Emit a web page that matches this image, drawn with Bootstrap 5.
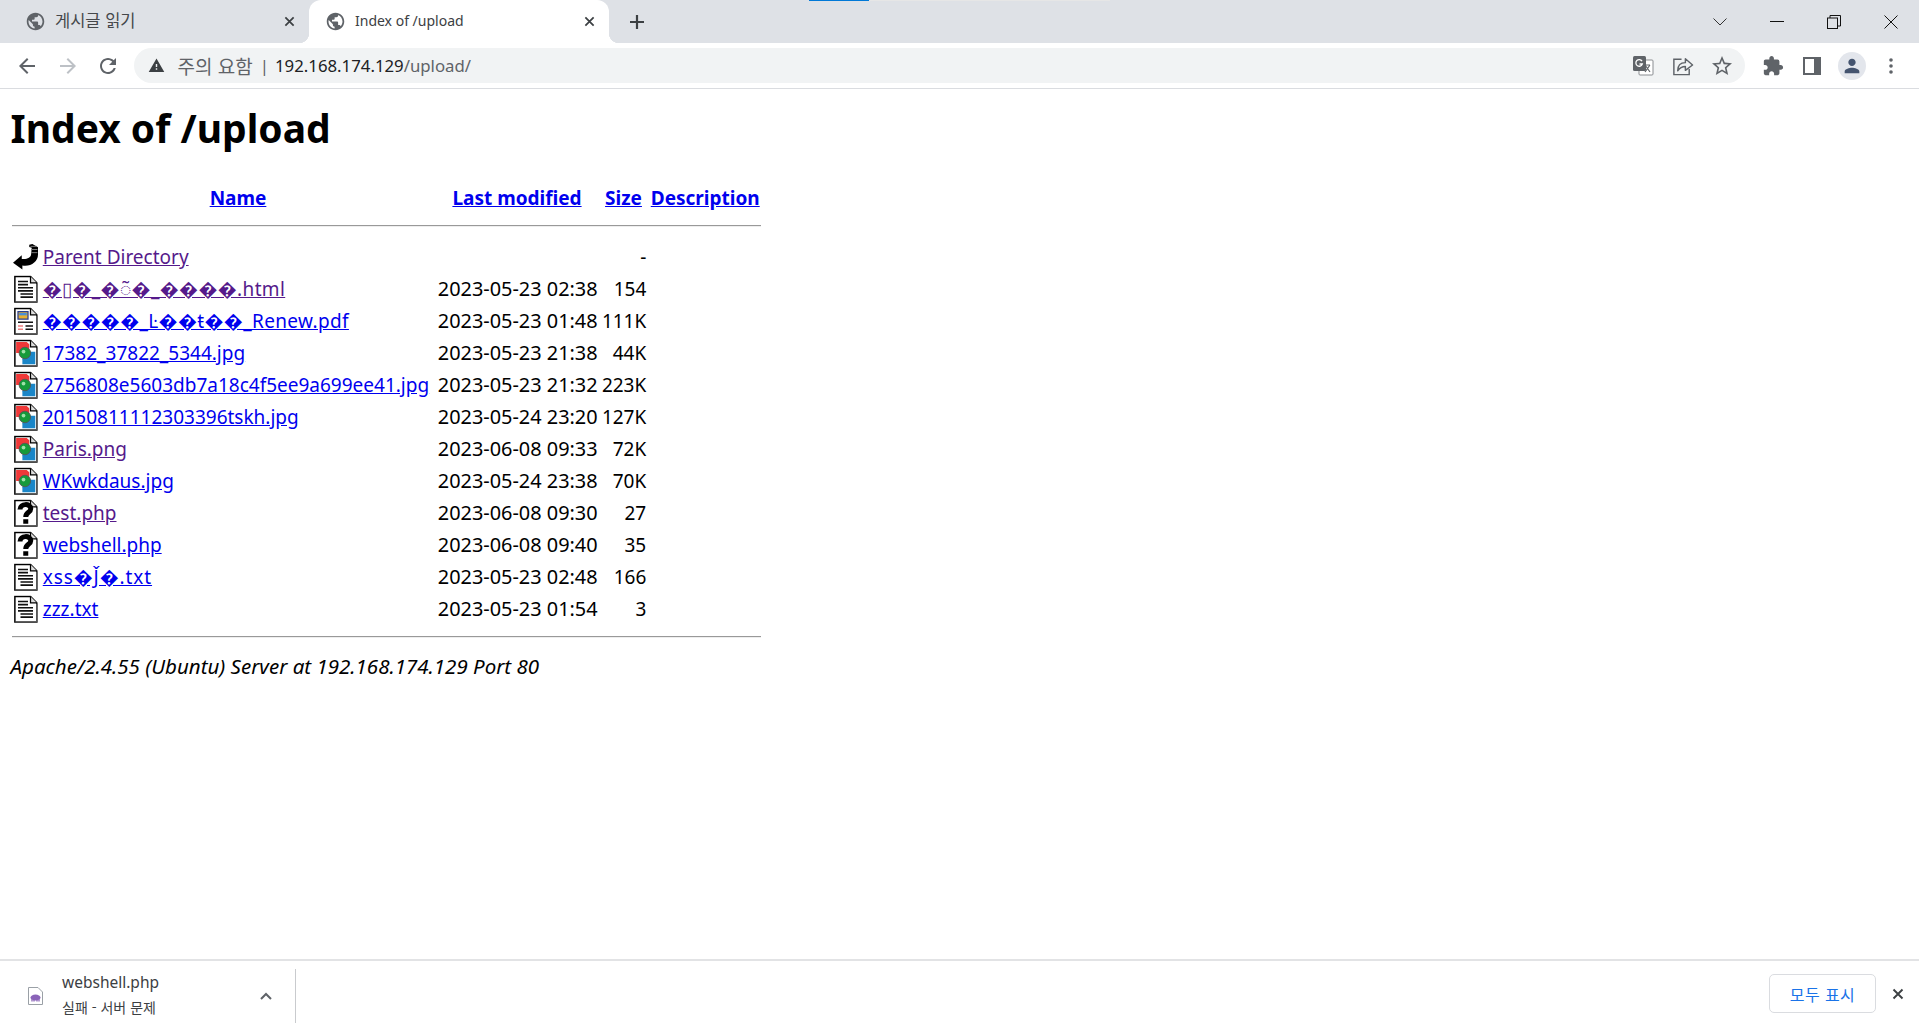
<!DOCTYPE html>
<html lang="ko"><head><meta charset="utf-8"><title>Index of /upload</title>
<link href="https://cdn.jsdelivr.net/npm/bootstrap@5.3.0/dist/css/bootstrap.min.css" rel="stylesheet">
<style>
html,body{height:100%;margin:0}
body{overflow:hidden;background:#fff;color:#000;font-family:"Noto Sans","Noto Sans CJK KR",sans-serif;font-size:19px}
.shell{height:1028px}
.strip{height:43px;background:#dee1e6;flex:none;position:relative;font-size:14px;color:#45474a}
.progress-a{position:absolute;left:809px;top:0;width:60px;height:1px;background:#0078d7}
.progress-b{position:absolute;left:869px;top:0;width:241px;height:1px;background:#e6e6e6}
.tabx{width:300px;height:43px;padding:0 10px 0 25px;position:relative;flex:none}
.tab-idle{width:309px}
.tab-on{background:#fff;border-radius:12px 12px 0 0;color:#3c4043}
.tab-on::before,.tab-on::after{content:"";position:absolute;bottom:0;width:10px;height:10px}
.tab-on::before{left:-10px;background:radial-gradient(circle at 0 0,transparent 10px,#fff 10.5px)}
.tab-on::after{right:-10px;background:radial-gradient(circle at 100% 0,transparent 10px,#fff 10.5px)}
.tab-title{flex:1;margin-left:9px;white-space:nowrap;padding-bottom:3px}
.tab-ko{font-size:16.5px;font-family:"Noto Sans CJK KR",sans-serif}
.ico{fill:#5f6368;flex:none}
.toolbar{height:46px;flex:none;border-bottom:1px solid #dadce0;padding:0 8px 0 7px;background:#fff}
.navbtn{width:40.5px;flex:none;display:flex;justify-content:center}
.omni{flex:1;height:35px;margin-left:5px;background:#f1f3f4;border-radius:18px;padding:0 0 0 14px;font-size:16.8px;color:#5f6368}
.omni b{font-weight:400;color:#202124}
.omni-ko{font-size:19px;font-family:"Noto Sans CJK KR",sans-serif;margin-left:13px;line-height:1}
.omni-sep{margin:0 6px 0 7px}
.omni-right{gap:16px;padding-right:11px}
.win-ctl{width:57px;flex:none;display:flex;justify-content:center}
.ext{width:39.5px;flex:none;display:flex;justify-content:center}
.avatar{width:28px;height:28px;border-radius:50%;background:#e3e6ec;display:flex;align-items:center;justify-content:center}
.pagebody{flex:1;min-height:0;padding:0 9.5px;overflow:hidden}
.pagebody h1{font-size:39px;font-weight:700;line-height:40px;margin:19px 0 34px 1px;letter-spacing:0}
.pagebody a{color:#00e}
.pagebody a.seen{color:#551a8b}
.pagebody a.sp1{letter-spacing:.35px}
.pagebody a.sp2{letter-spacing:.9px}
.lst{border-collapse:separate;border-spacing:2.5px 0;width:751px;table-layout:fixed}
.lst th,.lst td{padding:0 1.25px;height:32px;line-height:32px;white-space:nowrap;font-weight:400}
.lst th{font-weight:700;text-align:center}
.lst td.stamp{font-size:19.9px}
.lst svg{display:block}
.c1{width:28px}.c2{width:393px}.c3{width:161px}.c4{width:48px}.c5{width:111px}
.r{text-align:right}
.lst td.rule-cell{height:auto;line-height:0;padding:0}
.dir-rule{display:block;margin:0;opacity:1;height:2px;border:0;border-top:1px solid #999;border-bottom:1px solid #eee}
.rule-top{margin-top:11px;margin-bottom:14px}
.rule-bot{margin-top:11px}
.srv{font-style:italic;font-size:20.5px;margin-top:12px;margin-left:1px;line-height:32px}
.shelf{height:69px;flex:none;border-top:2px solid #e2e3e5;background:#fff;position:relative}
.dl{width:296px;height:54px;margin-top:8px;border-right:1px solid #c9cbce;padding-left:28px;flex:none}
.dl-txt{margin-left:19px;width:198px;line-height:1}
.dl-name{font-size:15.5px;color:#3c4043;margin-bottom:9px;margin-top:-3px}
.dl-sub{font-size:14px;color:#3c4043;font-family:"Noto Sans CJK KR",sans-serif}
.showall{width:107px;height:39px;border:1px solid #dadce0;border-radius:5px;color:#1a73e8;font-size:16px;background:#fff;padding:0;letter-spacing:.4px;font-family:"Noto Sans CJK KR",sans-serif}
.shelf-end{padding-right:15px;gap:16px;margin-top:13px}
.shelf-x{margin-top:14px}
</style></head>
<body>
<svg width="0" height="0" class="d-block position-absolute"><defs>
<symbol id="globe" viewBox="0 0 24 24"><path d="M12 2C6.48 2 2 6.48 2 12s4.48 10 10 10 10-4.48 10-10S17.52 2 12 2zm-1 17.93c-3.95-.49-7-3.85-7-7.93 0-.62.08-1.21.21-1.79L9 15v1c0 1.1.9 2 2 2v1.93zm6.9-2.54c-.26-.81-1-1.39-1.9-1.39h-1v-3c0-.55-.45-1-1-1H8v-2h2c.55 0 1-.45 1-1V7h2c1.1 0 2-.9 2-2v-.41c2.93 1.19 5 4.06 5 7.41 0 2.08-.8 3.97-2.1 5.39z"/></symbol>
<symbol id="xmark" viewBox="0 0 12 12"><path d="M1.500 1.500l9 9M10.500 1.500l-9 9" stroke="#3c4043" stroke-width="1.900" fill="none"/></symbol>
<symbol id="sheet" viewBox="0 0 20 22"><path d="M1.500 1H14L19 6V21.500H1.500Z" fill="#fff" stroke="#000" stroke-width="1.200"/><path d="M2 21.400H19V6.500" fill="none" stroke="#555" stroke-width="1.200"/><path d="M14 1V6H19" fill="#ddd" stroke="#000" stroke-width="1"/></symbol>
<symbol id="f-text" viewBox="0 0 20 22"><use href="#sheet"/><path d="M4 5h8M4 7.500h8M4 10h12M4 12.500h12M6 15h10M6 17.500h10" stroke="#111" stroke-width="1.300"/></symbol>
<symbol id="f-pdf" viewBox="0 0 20 22"><use href="#sheet"/><rect x="4" y="3.500" width="8" height="6" fill="#e8b030" stroke="#2a3f8f" stroke-width="1"/><rect x="5" y="4.500" width="6" height="2" fill="#4a8fd8"/><path d="M4 12h12M10 15h6M10 17.500h6" stroke="#111" stroke-width="1.200"/><path d="M4 15h4M4 17.500h4" stroke="#f08080" stroke-width="1.200"/></symbol>
<symbol id="f-img" viewBox="0 0 20 22"><use href="#sheet"/><path d="M2.500 2.200H11L13 4v4H9L7 11H2.500Z" fill="#f03838"/><path d="M10 10h7.800v10H7.500V16Z" fill="#1a86c8"/><circle cx="9.500" cy="11" r="4.600" fill="#169a3a" stroke="#555" stroke-width=".7"/><circle cx="8.400" cy="9.800" r="1.500" fill="#9fe0a8"/></symbol>
<symbol id="f-unk" viewBox="0 0 20 22"><use href="#sheet"/><path d="M5.600 8.200C5.600 3.200 14.200 3 14.200 7.600C14.200 10.600 10.200 10.400 10.200 14.200" fill="none" stroke="#000" stroke-width="4"/><rect x="8.200" y="16" width="4" height="3.600" fill="#000"/></symbol>
<symbol id="f-back" viewBox="0 0 20 22"><path d="M0 15.500L7 9.500V12.500C11 13 14.500 11.500 14.500 8.500L15 3.500L13 3V1.200L15.500 .6L20 3.200V9C20 15 14 19 7.500 17.800V21Z" fill="#000"/><path d="M14 2.500h5M14.500 5h5M14.500 7.500h5" stroke="#777" stroke-width=".8"/></symbol>
</defs></svg>
<div class="shell d-flex flex-column">
  <div class="strip d-flex">
    <div class="progress-a"></div><div class="progress-b"></div>
    <div class="tabx tab-idle d-flex align-items-center">
      <svg class="ico" width="21" height="21"><use href="#globe"/></svg>
      <span class="tab-title tab-ko">게시글 읽기</span>
      <svg class="me-1" width="11" height="11"><use href="#xmark"/></svg>
    </div>
    <div class="tabx tab-on d-flex align-items-center ps-3">
      <svg class="ico" width="21" height="21"><use href="#globe"/></svg>
      <span class="tab-title">Index of /upload</span>
      <svg class="me-1" width="11" height="11"><use href="#xmark"/></svg>
    </div>
    <div class="d-flex align-items-center ms-3 me-auto ps-1">
      <svg width="16" height="16" viewBox="0 0 16 16"><path d="M8 1v14M1 8h14" stroke="#3c4043" stroke-width="2.200"/></svg>
    </div>
    <div class="d-flex align-items-center">
      <div class="win-ctl"><svg width="14" height="8" viewBox="0 0 14 8"><path d="M.5 .5L7 7l6.500-6.500" fill="none" stroke="#333" stroke-width="1"/></svg></div>
      <div class="win-ctl"><svg width="14" height="2"><rect width="14" height="1" fill="#111"/></svg></div>
      <div class="win-ctl"><svg width="14" height="14" viewBox="0 0 14 14"><rect x=".5" y="3" width="10" height="10.500" fill="none" stroke="#111"/><path d="M3 3V.5H13.500V11H10.500" fill="none" stroke="#111"/></svg></div>
      <div class="win-ctl"><svg width="14" height="14" viewBox="0 0 14 14"><path d="M.5 .5l13 13M13.500 .5l-13 13" stroke="#111" stroke-width="1"/></svg></div>
    </div>
  </div>
  <div class="toolbar d-flex align-items-center">
    <div class="navbtn"><svg class="ico" width="24" height="24" viewBox="0 0 24 24"><path d="M20 11H7.830l5.590-5.590L12 4l-8 8 8 8 1.410-1.410L7.830 13H20v-2z"/></svg></div>
    <div class="navbtn"><svg width="24" height="24" viewBox="0 0 24 24" fill="#bdc1c6"><path d="M12 4l-1.410 1.410L16.170 11H4v2h12.170l-5.580 5.590L12 20l8-8z"/></svg></div>
    <div class="navbtn"><svg class="ico" width="24" height="24" viewBox="0 0 24 24"><path d="M17.650 6.350C16.200 4.900 14.210 4 12 4c-4.420 0-7.990 3.580-7.990 8s3.570 8 7.990 8c3.730 0 6.840-2.550 7.730-6h-2.080c-.82 2.330-3.040 4-5.650 4-3.310 0-6-2.690-6-6s2.690-6 6-6c1.660 0 3.140.69 4.220 1.780L13 11h7V4l-2.350 2.350z"/></svg></div>
    <div class="omni d-flex align-items-center">
      <svg class="ico" width="17" height="17" viewBox="0 0 24 24"><path fill="#3c4043" d="M1 21h22L12 2 1 21zm12-3h-2v-2h2v2zm0-4h-2v-4h2v4z"/></svg>
      <span class="omni-ko">주의 요함</span><span class="omni-sep">|</span><span><b>192.168.174.129</b>/upload/</span>
      <div class="ms-auto d-flex align-items-center omni-right">
        <svg width="24" height="24" viewBox="0 0 24 24"><rect x="8" y="6" width="14" height="15" rx="1" fill="#fff" stroke="#8a8d91" stroke-width="1"/><rect x="2" y="2" width="13" height="15" rx="1.500" fill="#5f6368"/><path d="M11 7.200A3.300 3.300 0 1 0 11.300 10H8.500" fill="none" stroke="#fff" stroke-width="1.300"/><path d="M14 11l5 7M19 11l-5 7M13 11h6" stroke="#5f6368" stroke-width="1.200" fill="none"/></svg>
        <svg width="23" height="24" viewBox="0 0 24 24" fill="none" stroke="#5f6368" stroke-width="1.500"><path d="M11 5H3V21H19V15"/><path d="M7 17C7 11 10.500 8.500 15 8.500V4.500L22.500 11L15 16.500V12.500C11.500 12.500 9 14 7 17Z" stroke-linejoin="round"/></svg>
        <svg class="ico" width="24" height="24" viewBox="0 0 24 24"><path d="M22 9.240l-7.190-.62L12 2 9.190 8.630 2 9.240l5.460 4.730L5.820 21 12 17.270 18.180 21l-1.630-7.030L22 9.240zM12 15.400l-3.760 2.270 1-4.280-3.320-2.880 4.380-.38L12 6.100l1.710 4.040 4.380.38-3.320 2.880 1 4.280L12 15.400z"/></svg>
      </div>
    </div>
    <div class="ext ms-2"><svg class="ico" width="22" height="22" viewBox="0 0 24 24"><path d="M20.500 11H19V7c0-1.100-.9-2-2-2h-4V3.500C13 2.120 11.880 1 10.500 1S8 2.120 8 3.500V5H4c-1.100 0-1.990.9-1.990 2v3.800H3.500c1.490 0 2.700 1.210 2.700 2.700s-1.210 2.700-2.700 2.700H2V20c0 1.100.9 2 2 2h3.800v-1.500c0-1.490 1.210-2.700 2.700-2.700 1.490 0 2.700 1.210 2.700 2.700V22H17c1.100 0 2-.9 2-2v-4h1.500c1.380 0 2.500-1.120 2.500-2.500S21.880 11 20.500 11z"/></svg></div>
    <div class="ext"><svg width="18" height="18" viewBox="0 0 18 18"><rect width="18" height="18" fill="#5f6368"/><rect x="2" y="2" width="9" height="14" fill="#fff"/></svg></div>
    <div class="ext"><div class="avatar"><svg width="22" height="22" viewBox="0 0 24 24" fill="#44546f"><path d="M12 12c2.210 0 4-1.790 4-4s-1.790-4-4-4-4 1.790-4 4 1.790 4 4 4zm0 2c-2.670 0-8 1.340-8 4v2h16v-2c0-2.660-5.330-4-8-4z"/></svg></div></div>
    <div class="ext"><svg width="4" height="16" viewBox="0 0 4 16" fill="#5f6368"><circle cx="2" cy="2" r="1.800"/><circle cx="2" cy="8" r="1.800"/><circle cx="2" cy="14" r="1.800"/></svg></div>
  </div>
  <main class="pagebody">
    <h1>Index of /upload</h1>
    <table class="lst">
      <colgroup><col class="c1"><col class="c2"><col class="c3"><col class="c4"><col class="c5"></colgroup>
      <tr><th></th><th><a href="#">Name</a></th><th><a href="#">Last modified</a></th><th><a href="#">Size</a></th><th><a href="#">Description</a></th></tr>
      <tr><td class="rule-cell" colspan="5"><hr class="dir-rule rule-top"></td></tr>
      <tr><td><svg width="25" height="28"><use href="#f-back"/></svg></td><td><a class="seen" href="#">Parent Directory</a></td><td></td><td class="r">-</td><td></td></tr>
      <tr><td><svg width="25" height="28"><use href="#f-text"/></svg></td><td><a class="seen sp1" href="#">�▯�_�◌̃�_����.html</a></td><td class="stamp">2023-05-23 02:38</td><td class="r">154</td><td></td></tr>
      <tr><td><svg width="25" height="28"><use href="#f-pdf"/></svg></td><td><a class="sp1" href="#">�����_Ŀ��ŧ��_Renew.pdf</a></td><td class="stamp">2023-05-23 01:48</td><td class="r">111K</td><td></td></tr>
      <tr><td><svg width="25" height="28"><use href="#f-img"/></svg></td><td><a href="#">17382_37822_5344.jpg</a></td><td class="stamp">2023-05-23 21:38</td><td class="r">44K</td><td></td></tr>
      <tr><td><svg width="25" height="28"><use href="#f-img"/></svg></td><td><a href="#">2756808e5603db7a18c4f5ee9a699ee41.jpg</a></td><td class="stamp">2023-05-23 21:32</td><td class="r">223K</td><td></td></tr>
      <tr><td><svg width="25" height="28"><use href="#f-img"/></svg></td><td><a href="#">20150811112303396tskh.jpg</a></td><td class="stamp">2023-05-24 23:20</td><td class="r">127K</td><td></td></tr>
      <tr><td><svg width="25" height="28"><use href="#f-img"/></svg></td><td><a class="seen" href="#">Paris.png</a></td><td class="stamp">2023-06-08 09:33</td><td class="r">72K</td><td></td></tr>
      <tr><td><svg width="25" height="28"><use href="#f-img"/></svg></td><td><a href="#">WKwkdaus.jpg</a></td><td class="stamp">2023-05-24 23:38</td><td class="r">70K</td><td></td></tr>
      <tr><td><svg width="25" height="28"><use href="#f-unk"/></svg></td><td><a class="seen" href="#">test.php</a></td><td class="stamp">2023-06-08 09:30</td><td class="r">27</td><td></td></tr>
      <tr><td><svg width="25" height="28"><use href="#f-unk"/></svg></td><td><a href="#">webshell.php</a></td><td class="stamp">2023-06-08 09:40</td><td class="r">35</td><td></td></tr>
      <tr><td><svg width="25" height="28"><use href="#f-text"/></svg></td><td><a class="sp2" href="#">xss�J̌�.txt</a></td><td class="stamp">2023-05-23 02:48</td><td class="r">166</td><td></td></tr>
      <tr><td><svg width="25" height="28"><use href="#f-text"/></svg></td><td><a href="#">zzz.txt</a></td><td class="stamp">2023-05-23 01:54</td><td class="r">3</td><td></td></tr>
      <tr><td class="rule-cell" colspan="5"><hr class="dir-rule rule-bot"></td></tr>
    </table>
    <address class="srv mb-0">Apache/2.4.55 (Ubuntu) Server at 192.168.174.129 Port 80</address>
  </main>
  <div class="shelf d-flex justify-content-between">
    <div class="dl d-flex align-items-center">
      <svg width="15" height="18" viewBox="0 0 15 18"><path d="M.5 .5H10L14.500 5V17.500H.5Z" fill="#fff" stroke="#9aa0a6"/><ellipse cx="7.500" cy="10.500" rx="5" ry="3" fill="#8a63b8"/><path d="M4 12v2.500M6 12v2.500M9 12v2.500M11 12v2.500" stroke="#8a63b8" stroke-width="1.300"/></svg>
      <div class="dl-txt"><div class="dl-name">webshell.php</div><div class="dl-sub">실패 - 서버 문제</div></div>
      <svg width="12" height="8" viewBox="0 0 12 8"><path d="M1 7L6 2l5 5" fill="none" stroke="#5f6368" stroke-width="2"/></svg>
    </div>
    <div class="d-flex align-items-start shelf-end">
      <button class="btn showall" type="button">모두 표시</button>
      <svg class="shelf-x" width="12" height="12"><use href="#xmark"/></svg>
    </div>
  </div>
</div>
</body></html>
